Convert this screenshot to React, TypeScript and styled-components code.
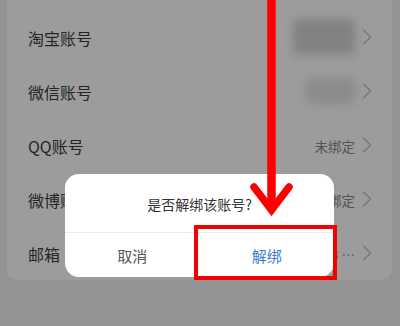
import styled, { createGlobalStyle } from 'styled-components';

const GlobalStyle = createGlobalStyle`
  html, body {
    margin: 0;
    padding: 0;
    width: 400px;
    height: 326px;
    overflow: hidden;
  }

  body {
    font-family: "Noto Sans CJK SC", "Noto Sans", sans-serif;
  }

  * {
    box-sizing: border-box;
  }
`;

interface IAccount {
  label: string;
  value?: string;
  masked?: { width: number; height: number; tone: string };
}

const accounts: IAccount[] = [
  { label: '淘宝账号', masked: { width: 62, height: 36, tone: '#d4d4d4' } },
  { label: '微信账号', masked: { width: 50, height: 26, tone: '#e4e4e4' } },
  { label: 'QQ账号', value: '未绑定' },
  { label: '微博账号', value: '未绑定' },
  { label: '邮箱', value: '@163 …' },
];

function Chevron() {
  return (
    <ChevronIcon viewBox="0 0 10 16" width="10" height="16">
      <polyline points="1.5,1 8.5,8 1.5,15" />
    </ChevronIcon>
  );
}

export default function App() {
  return (
    <Screen>
      <GlobalStyle />
      <Card>
        {accounts.map((item) => (
          <Row key={item.label}>
            <Label>{item.label}</Label>
            <Value>
              {item.masked ? (
                <Masked
                  $w={item.masked.width}
                  $h={item.masked.height}
                  $tone={item.masked.tone}
                />
              ) : (
                <ValueText>{item.value}</ValueText>
              )}
              <Chevron />
            </Value>
          </Row>
        ))}
      </Card>

      <Overlay />

      <Dialog>
        <DialogTitle>是否解绑该账号?</DialogTitle>
        <Actions>
          <ActionButton>取消</ActionButton>
          <ActionButton $primary>解绑</ActionButton>
        </Actions>
      </Dialog>

      <Highlight />

      <Arrow viewBox="0 0 400 326" width="400" height="326">
        <line x1="271.5" y1="-4" x2="271.5" y2="206" />
        <polyline points="254,187 271.5,210 289,187" />
      </Arrow>
    </Screen>
  );
}

const Screen = styled.div`
  position: relative;
  width: 400px;
  height: 326px;
  overflow: hidden;
  background: #f1f1f1;
`;

const Card = styled.div`
  margin: 0 8px 0 7px;
  padding-top: 10px;
  background: #ffffff;
  border-radius: 0 0 10px 10px;
`;

const Row = styled.div`
  height: 54px;
  padding: 0 20px 0 21px;
  display: flex;
  align-items: center;
  justify-content: space-between;
`;

const Label = styled.div`
  font-size: 16px;
  color: #3c3c3c;
  padding-top: 2px;
`;

const Value = styled.div`
  display: flex;
  align-items: center;
  gap: 7px;
`;

const ValueText = styled.span`
  font-size: 13.5px;
  color: #8a8a8a;
  padding-top: 2px;
  white-space: pre;
`;

const Masked = styled.div<{ $w: number; $h: number; $tone: string }>`
  width: ${(p) => p.$w}px;
  height: ${(p) => p.$h}px;
  background: ${(p) => p.$tone};
  border-radius: 6px;
  filter: blur(5px);
`;

const ChevronIcon = styled.svg`
  fill: none;
  stroke: #c4c4c4;
  stroke-width: 1.4;
  stroke-linecap: round;
  stroke-linejoin: round;
`;

const Overlay = styled.div`
  position: absolute;
  inset: 0;
  background: rgba(0, 0, 0, 0.39);
`;

const Dialog = styled.div`
  position: absolute;
  left: 65px;
  top: 174px;
  width: 269px;
  height: 103px;
  background: #ffffff;
  border-radius: 14px;
  display: flex;
  flex-direction: column;
`;

const DialogTitle = styled.div`
  height: 58px;
  display: flex;
  align-items: center;
  justify-content: center;
  font-size: 14px;
  color: #333333;
  padding-top: 2px;
`;

const Actions = styled.div`
  flex: 1;
  display: grid;
  grid-template-columns: 1fr 1fr;
  border-top: 1px solid #ececec;
`;

const ActionButton = styled.div<{ $primary?: boolean }>`
  display: flex;
  align-items: center;
  justify-content: center;
  font-size: 15px;
  color: ${(p) => (p.$primary ? '#3b78d4' : '#555555')};
  cursor: pointer;
`;

const Highlight = styled.div`
  position: absolute;
  left: 194px;
  top: 225px;
  width: 143px;
  height: 55px;
  border: 4px solid #f40000;
`;

const Arrow = styled.svg`
  position: absolute;
  left: 0;
  top: 0;
  fill: none;
  stroke: #ff0000;
  stroke-width: 8.5;
  stroke-linejoin: miter;

  polyline {
    stroke-width: 7.5;
    stroke-linecap: round;
  }
`;
